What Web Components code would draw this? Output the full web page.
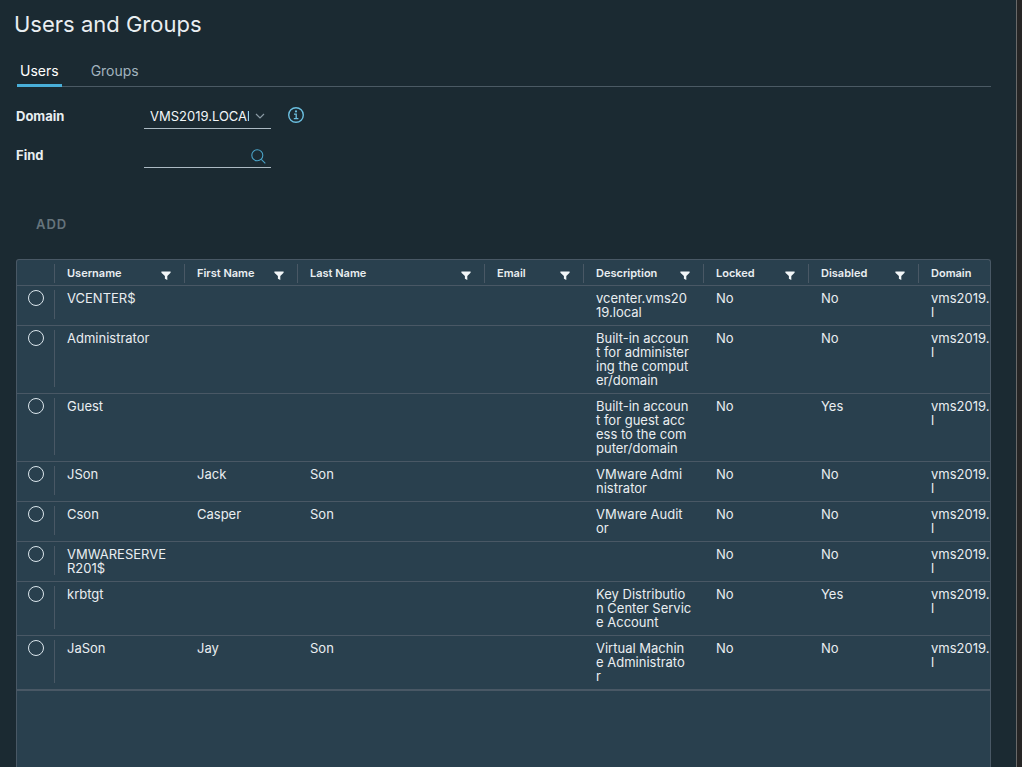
<!DOCTYPE html>
<html lang="en">
<head>
<meta charset="utf-8">
<meta name="viewport" content="width=device-width, initial-scale=1">
<title>Users and Groups</title>
<style>
  html { --page: #1b2a32; --panel: #29404e; --line: #495865; --accent: #49afd9; --text: #e9eef1; }
  body { margin: 0; background: var(--page); color: var(--text); font: 13px/14px Inter, "Liberation Sans", sans-serif; }
</style>
</head>
<body>
<admin-page heading="Users and Groups">
  <tab-bar slot="tabs"></tab-bar>
  <user-search slot="search"></user-search>
  <action-bar slot="actions">ADD</action-bar>
  <user-grid slot="grid"></user-grid>
</admin-page>
<script>
const define = (name, html, setup) => {
  const template = document.createElement('template');
  template.innerHTML = html;
  customElements.define(name, class extends HTMLElement {
    constructor() {
      super();
      this.attachShadow({ mode: 'open' }).append(template.content.cloneNode(true));
      if (setup) setup(this, this.shadowRoot);
    }
  });
};

define('filter-icon', `
<style>:host { display: block; width: 10px; height: 10px; } svg { display: block; fill: #f2f6f8; }</style>
<svg width="10" height="10" viewBox="0 0 10 10" aria-hidden="true"><path d="M0.4 0.6h9.2v1.2L6.3 5V8.9L3.9 7.8V5L0.4 1.8z"/></svg>`);

define('info-icon', `
<style>:host { display: block; width: 16px; height: 16px; } svg { display: block; }</style>
<svg width="16" height="16" viewBox="0 0 16 16" fill="none" stroke="#6bbfe0" role="img" aria-label="Information">
  <circle cx="8" cy="8" r="7.3" stroke-width="1.4"/>
  <circle cx="8" cy="4.4" r="1.1" fill="#6bbfe0" stroke="none"/>
  <path d="M6 7.2h2.2v4.4M5.8 11.6h4.6" stroke-width="1.3"/>
</svg>`);

define('tab-bar', `
<style>
  :host { display: flex; gap: 26px; height: 26px; margin-left: 1px; border-bottom: 1px solid #4b5a64; }
  button { box-sizing: border-box; height: 27px; padding: 0 3px 3px; border: 0; border-bottom: 3px solid transparent; background: none; color: #a2b3be; font: inherit; font-size: 14px; line-height: 20px; }
  button[aria-selected=true] { color: #fff; border-color: var(--accent); }
</style>
<button role="tab" aria-selected="true">Users</button>
<button role="tab" aria-selected="false">Groups</button>`,
  host => host.setAttribute('role', 'tablist'));

define('user-search', `
<style>
  :host { display: grid; grid-template-columns: 128px 127px auto; grid-auto-rows: 25px; row-gap: 14px; align-items: center; }
  label { padding-bottom: 2px; font-weight: 700; }
  .field { display: grid; grid-template-columns: 1fr 22px; align-items: center; height: 24px; border-bottom: 1px solid #acbac3; }
  select, input { grid-area: 1 / 1; width: 100%; min-width: 0; height: 24px; margin: 0; padding: 0 0 0 6px; border: 0; outline: 0; appearance: none; background: none; color: #f2f6f8; font: inherit; box-sizing: border-box; }
  .field svg { grid-area: 1 / 2; }
  .chevron { margin-left: 6px; }
  .search { margin: 2px 0 0 2px; }
  option { background: var(--page); }
  info-icon { margin: 0 0 3px 17px; }
</style>
<label for="domain">Domain</label>
<div class="field">
  <select id="domain"><option>VMS2019.LOCAL</option></select>
  <svg class="chevron" width="10" height="7" viewBox="0 0 10 7" fill="none" stroke="#8a9aa4" stroke-width="1.2" aria-hidden="true"><path d="M1 1l4 4 4-4"/></svg>
</div>
<info-icon></info-icon>
<label for="find">Find</label>
<div class="field">
  <input id="find" type="text">
  <svg class="search" width="15" height="15" viewBox="0 0 15 15" fill="none" stroke="#4aa3c7" stroke-width="1.1" aria-hidden="true"><circle cx="6.3" cy="6.3" r="5.5"/><path d="M10.3 10.3l4 4"/></svg>
</div>`);

define('action-bar', `
<style>
  :host { display: flex; }
  button { height: 36px; padding: 0 20px; border: 0; background: none; color: #66747c; font: inherit; font-weight: 600; letter-spacing: 1px; }
</style>
<button disabled><slot></slot></button>`);

const columns = ['Username', 'First Name', 'Last Name', 'Email', 'Description', 'Locked', 'Disabled', 'Domain'];
const users = [
  ['VCENTER$', '', '', '', 'vcenter.vms20\n19.local', 'No', 'No'],
  ['Administrator', '', '', '', 'Built-in accoun\nt for administer\ning the comput\ner/domain', 'No', 'No'],
  ['Guest', '', '', '', 'Built-in accoun\nt for guest acc\ness to the com\nputer/domain', 'No', 'Yes'],
  ['JSon', 'Jack', 'Son', '', 'VMware Admi\nnistrator', 'No', 'No'],
  ['Cson', 'Casper', 'Son', '', 'VMware Audit\nor', 'No', 'No'],
  ['VMWARESERVE\nR201$', '', '', '', '', 'No', 'No'],
  ['krbtgt', '', '', '', 'Key Distributio\nn Center Servic\ne Account', 'No', 'Yes'],
  ['JaSon', 'Jay', 'Son', '', 'Virtual Machin\ne Administrato\nr', 'No', 'No']
];

define('user-grid', `
<style>
  :host { display: block; overflow: hidden; border: 1px solid var(--line); border-bottom: 0; border-radius: 3px 3px 0 0; background: var(--panel); }
  table { width: 100%; table-layout: fixed; border-spacing: 0; border-bottom: 1px solid var(--line); }
  th, td { padding: 0; border-bottom: 1px solid var(--line); text-align: left; vertical-align: top; }
  th { height: 25px; font-size: 11px; font-weight: 600; }
  td { padding: 5px 0 6px 12px; white-space: pre; }
  .head { display: flex; justify-content: space-between; height: 19px; margin: 4px 0 2px; padding: 0 13px 0 12px; border-right: 1px solid var(--line); line-height: 18px; }
  .head filter-icon { margin-top: 7px; }
  th:last-child .head { border: 0; padding-right: 0; }
  td.pick { height: 1px; padding: 5px 0; }
  .pick div { box-sizing: border-box; height: 100%; padding-left: 11px; border-right: 1px solid var(--line); }
  input { display: block; appearance: none; box-sizing: border-box; width: 16px; height: 16px; margin: -1px 0 0; border: 1px solid #dbe6ec; border-radius: 50%; }
</style>
<table>
  <colgroup><col style="width:38px"><col style="width:130px"><col style="width:113px"><col style="width:187px"><col style="width:99px"><col style="width:120px"><col style="width:105px"><col style="width:110px"><col></colgroup>
  <thead><tr><th><div class="head"></div></th></tr></thead>
  <tbody></tbody>
</table>`, (host, root) => {
  const headRow = root.querySelector('thead tr');
  columns.forEach((name, i) => {
    const th = document.createElement('th');
    th.scope = 'col';
    const div = document.createElement('div');
    div.className = 'head';
    const span = document.createElement('span');
    span.textContent = name;
    div.append(span);
    if (i < columns.length - 1) div.append(document.createElement('filter-icon'));
    th.append(div);
    headRow.append(th);
  });
  const body = root.querySelector('tbody');
  users.forEach(user => {
    const row = body.insertRow();
    const pick = row.insertCell();
    pick.className = 'pick';
    const box = document.createElement('div');
    const radio = document.createElement('input');
    radio.type = 'radio';
    radio.name = 'user';
    radio.setAttribute('aria-label', user[0].replace('\n', ''));
    box.append(radio);
    pick.append(box);
    [...user, 'vms2019.\nl'].forEach(value => { row.insertCell().textContent = value; });
  });
});

define('admin-page', `
<style>
  :host { display: grid; grid-template-columns: 1fr 5px; min-height: 100vh; }
  main { display: flex; flex-direction: column; min-width: 0; padding: 8px 25px 0 16px; border-right: 1px solid #696969; }
  h1 { margin: 0 0 20px -2px; font-size: 22px; line-height: 32px; font-weight: 400; }
  .edge { background: #262525; }
  slot[name=search]::slotted(*) { margin-top: 17px; }
  slot[name=actions]::slotted(*) { margin: 38px 0 17px; }
  slot[name=grid]::slotted(*) { flex: 1; }
</style>
<main>
  <h1></h1>
  <slot name="tabs"></slot>
  <slot name="search"></slot>
  <slot name="actions"></slot>
  <slot name="grid"></slot>
</main>
<div class="edge"></div>`, (host, root) => {
  root.querySelector('h1').textContent = host.getAttribute('heading');
});
</script>
</body>
</html>
